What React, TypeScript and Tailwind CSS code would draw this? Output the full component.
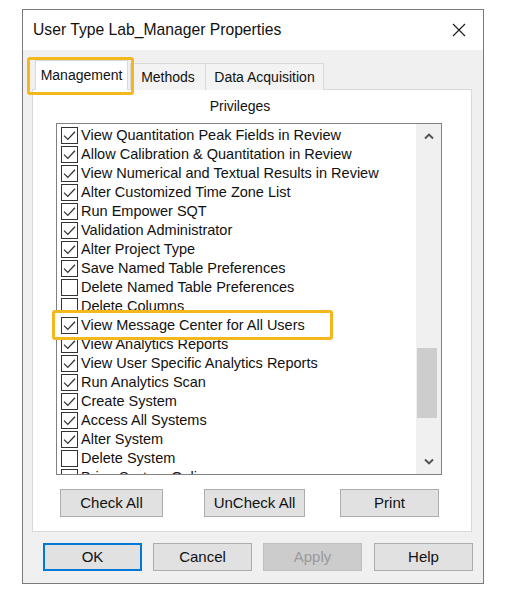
import React from "react";

const FONT = { fontFamily: '"Liberation Sans", Arial, sans-serif' };

type Item = { label: string; checked: boolean };

const items: Item[] = [
  { label: "View Quantitation Peak Fields in Review", checked: true },
  { label: "Allow Calibration & Quantitation in Review", checked: true },
  { label: "View Numerical and Textual Results in Review", checked: true },
  { label: "Alter Customized Time Zone List", checked: true },
  { label: "Run Empower SQT", checked: true },
  { label: "Validation Administrator", checked: true },
  { label: "Alter Project Type", checked: true },
  { label: "Save Named Table Preferences", checked: true },
  { label: "Delete Named Table Preferences", checked: false },
  { label: "Delete Columns", checked: false },
  { label: "View Message Center for All Users", checked: true },
  { label: "View Analytics Reports", checked: true },
  { label: "View User Specific Analytics Reports", checked: true },
  { label: "Run Analytics Scan", checked: true },
  { label: "Create System", checked: true },
  { label: "Access All Systems", checked: true },
  { label: "Alter System", checked: true },
  { label: "Delete System", checked: false },
  { label: "Bring System Online", checked: false },
];

function Check({ checked }: { checked: boolean }) {
  return (
    <div className="w-[17px] h-[17px] shrink-0 border border-[#333333] bg-white flex items-center justify-center">
      {checked && (
        <svg width="15" height="15" viewBox="0 0 15 15">
          <path d="M2 7.6 L5.8 11.4 L13 3.8" fill="none" stroke="#333333" strokeWidth="1.3" />
        </svg>
      )}
    </div>
  );
}

function Row({ item }: { item: Item }) {
  return (
    <div className="flex items-center h-[19px] pl-[4px]">
      <Check checked={item.checked} />
      <span className="ml-[3px] text-[14.5px] leading-none whitespace-nowrap text-[#111111]">{item.label}</span>
    </div>
  );
}

function Btn({ label, w, ml, variant }: { label: string; w: string; ml: string; variant?: "default" | "disabled" }) {
  const base = "h-[28px] flex items-center justify-center text-[15px] shrink-0";
  let cls = "bg-[#e1e1e1] border border-[#adadad] text-[#111111]";
  if (variant === "default") cls = "bg-[#e1e1e1] border-2 border-[#0078d7] text-[#111111]";
  if (variant === "disabled") cls = "bg-[#cccccc] border border-[#bfbfbf] text-[#9a9a9a]";
  return <div className={`${base} ${cls} ${w} ${ml}`}>{label}</div>;
}

export default function App() {
  return (
    <div className="w-[515px] h-[607px] bg-white pt-[9px] pl-[22px]" style={FONT}>
      <div className="relative w-[462px] h-[575px] border border-[#7a7a7a] bg-[#f0f0f0] flex flex-col">
        {/* Title bar */}
        <div className="h-[40px] shrink-0 bg-white flex items-center justify-between pl-[10px] pr-[17px]">
          <span className="text-[15.7px] text-[#111111]">User Type Lab_Manager Properties</span>
          <svg width="14" height="14" viewBox="0 0 14 14">
            <path d="M1 1 L13 13 M13 1 L1 13" stroke="#1a1a1a" strokeWidth="1.1" />
          </svg>
        </div>

        {/* Body */}
        <div className="flex-1 pt-[10px]">
          {/* Tabs */}
          <div className="relative z-10 flex items-end h-[30px] ml-[12px] -mb-[1px]">
            <div className="w-[93px] h-[30px] bg-white border border-b-0 border-[#d9d9d9] flex items-center justify-center text-[14px] text-[#111111]">
              Management
            </div>
            <div className="ml-[2px] w-[76px] h-[27px] bg-[#f3f3f3] border border-b-0 border-[#d9d9d9] flex items-center justify-center text-[14px] text-[#111111]">
              Methods
            </div>
            <div className="w-[118px] h-[27px] bg-[#f3f3f3] border border-l-0 border-b-0 border-[#d9d9d9] flex items-center justify-center text-[14px] text-[#111111]">
              Data Acquisition
            </div>
          </div>

          {/* Panel */}
          <div className="ml-[9px] w-[440px] h-[443px] bg-white border border-[#d9d9d9] flex flex-col">
            <div className="mt-[6px] h-[20px] leading-[20px] text-center pr-[24px] text-[14px] text-[#111111]">Privileges</div>

            <div className="ml-[23px] mt-[7px] w-[386px] h-[352px] border border-[#828282] flex overflow-hidden">
              <div className="flex-1 pt-[2px] overflow-hidden">
                {items.map((it) => (
                  <Row key={it.label} item={it} />
                ))}
              </div>
              <div className="w-[25px] bg-[#f0f0f0] flex flex-col">
                <div className="h-[25px] flex items-center justify-center">
                  <svg width="10" height="7" viewBox="0 0 10 7">
                    <path d="M1 5.5 L5 1.5 L9 5.5" fill="none" stroke="#505050" strokeWidth="1.9" />
                  </svg>
                </div>
                <div className="flex-1 pt-[199px]">
                  <div className="ml-[1px] w-[20px] h-[70px] bg-[#cdcdcd]" />
                </div>
                <div className="h-[25px] flex items-center justify-center">
                  <svg width="10" height="7" viewBox="0 0 10 7">
                    <path d="M1 1.5 L5 5.5 L9 1.5" fill="none" stroke="#505050" strokeWidth="1.9" />
                  </svg>
                </div>
              </div>
            </div>

            <div className="flex mt-[14px] ml-[27px]">
              <Btn label="Check All" w="w-[103px]" ml="ml-0" />
              <Btn label="UnCheck All" w="w-[101px]" ml="ml-[41px]" />
              <Btn label="Print" w="w-[99px]" ml="ml-[35px]" />
            </div>
          </div>

          {/* Bottom buttons */}
          <div className="flex mt-[11px] ml-[20px]">
            <Btn label="OK" w="w-[99px]" ml="ml-0" variant="default" />
            <Btn label="Cancel" w="w-[99px]" ml="ml-[11px]" />
            <Btn label="Apply" w="w-[99px]" ml="ml-[11px]" variant="disabled" />
            <Btn label="Help" w="w-[99px]" ml="ml-[12px]" />
          </div>
        </div>

        {/* Highlight overlays */}
        <div className="absolute left-[4px] top-[47px] w-[107px] h-[38px] border-[3px] border-[#f5b81c] rounded-[3px] z-20" />
        <div className="absolute left-[29px] top-[300px] w-[281px] h-[30px] border-[3px] border-[#f5b81c] rounded-[3px] bg-white z-20 flex items-center pl-[6px]">
          <Check checked={true} />
          <span className="ml-[3px] text-[14.5px] leading-none whitespace-nowrap text-[#111111]">View Message Center for All Users</span>
        </div>
      </div>
    </div>
  );
}
